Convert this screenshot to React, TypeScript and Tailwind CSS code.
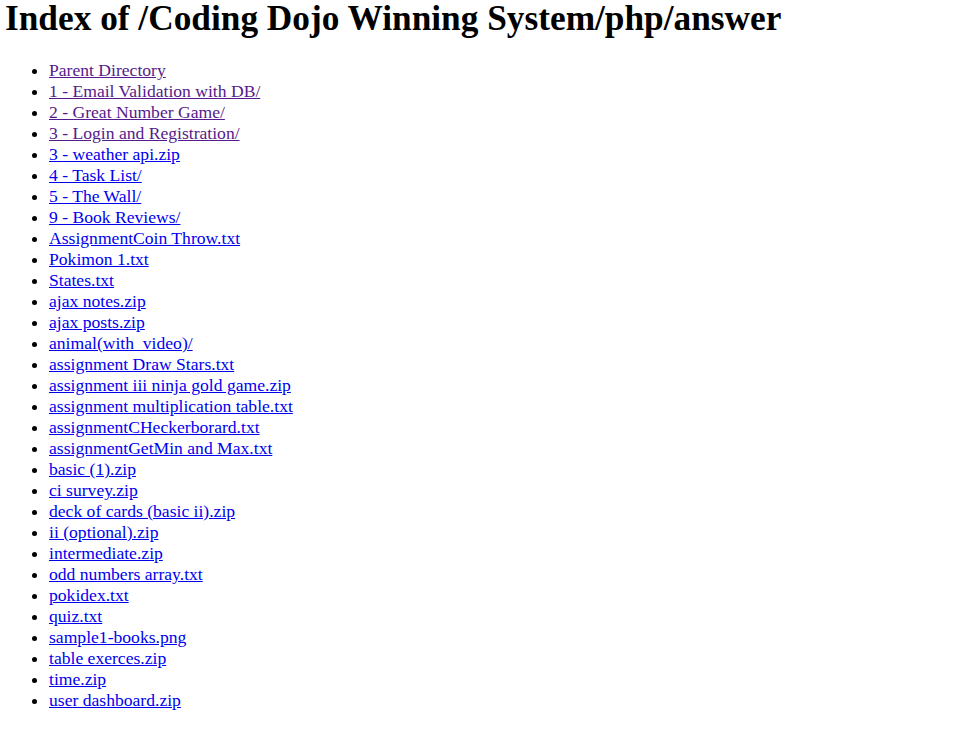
const entries: { name: string; visited?: boolean }[] = [
  { name: "Parent Directory", visited: true },
  { name: "1 - Email Validation with DB/", visited: true },
  { name: "2 - Great Number Game/", visited: true },
  { name: "3 - Login and Registration/", visited: true },
  { name: "3 - weather api.zip" },
  { name: "4 - Task List/" },
  { name: "5 - The Wall/" },
  { name: "9 - Book Reviews/" },
  { name: "AssignmentCoin Throw.txt" },
  { name: "Pokimon 1.txt" },
  { name: "States.txt" },
  { name: "ajax notes.zip" },
  { name: "ajax posts.zip" },
  { name: "animal(with_video)/" },
  { name: "assignment Draw Stars.txt" },
  { name: "assignment iii ninja gold game.zip" },
  { name: "assignment multiplication table.txt" },
  { name: "assignmentCHeckerborard.txt" },
  { name: "assignmentGetMin and Max.txt" },
  { name: "basic (1).zip" },
  { name: "ci survey.zip" },
  { name: "deck of cards (basic ii).zip" },
  { name: "ii (optional).zip" },
  { name: "intermediate.zip" },
  { name: "odd numbers array.txt" },
  { name: "pokidex.txt" },
  { name: "quiz.txt" },
  { name: "sample1-books.png" },
  { name: "table exerces.zip" },
  { name: "time.zip" },
  { name: "user dashboard.zip" },
]

export default function App() {
  return (
    <div className="min-h-screen bg-white px-[5px] text-black [font-family:'Liberation_Serif',serif]">
      <h1 className="m-0 text-[35.3px] font-bold leading-[38px]">Index of /Coding Dojo Winning System/php/answer</h1>
      <ul className="mt-[22px] list-disc pl-[44px] text-[17.6px] leading-[21px]">
        {entries.map((e) => (
          <li key={e.name}>
            <a href="#" className={`underline ${e.visited ? "text-[#551a8b]" : "text-[#0000ee]"}`}>
              {e.name}
            </a>
          </li>
        ))}
      </ul>
    </div>
  )
}
